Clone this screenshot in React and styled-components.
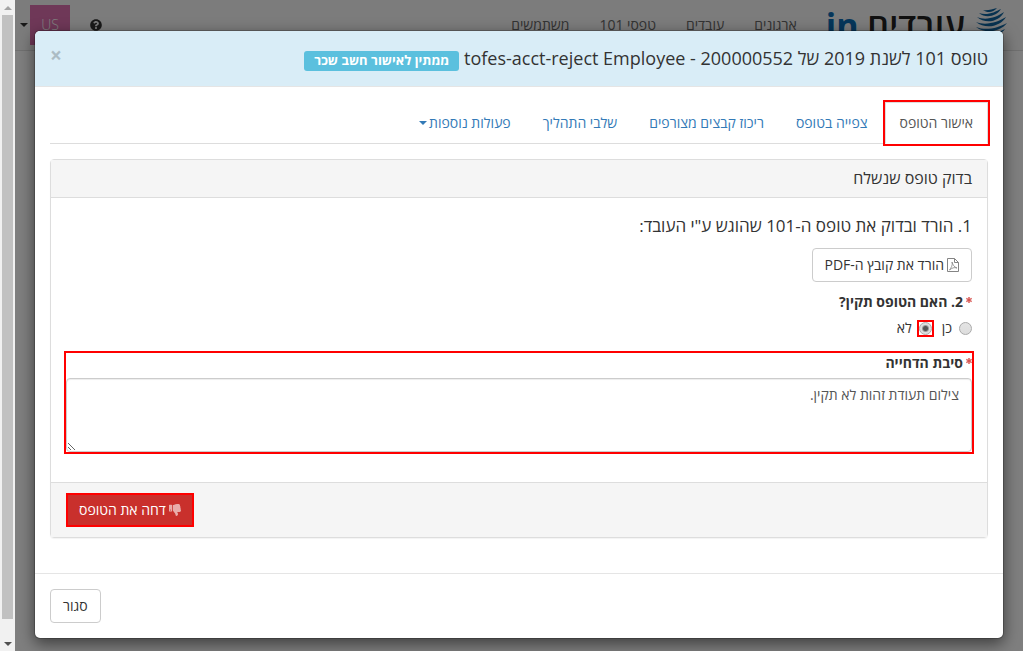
import React from "react";
import styled, { createGlobalStyle } from "styled-components";
import { FaAsterisk, FaQuestionCircle, FaThumbsDown } from "react-icons/fa";

const GlobalStyle = createGlobalStyle`
  * {
    box-sizing: border-box;
  }
  body {
    margin: 0;
    color: #333;
    background: #fff;
    font-family: "Open Sans", "Noto Sans", "DejaVu Sans", sans-serif;
    font-size: 14px;
    line-height: 20px;
  }
  button, input, textarea {
    font: inherit;
    color: inherit;
  }
`;

const Page = styled.div`
  display: flex;
  min-height: 100vh;
`;

const Scrollbar = styled.div`
  display: flex;
  flex-direction: column;
  flex: 0 0 15px;
  height: 100vh;
  padding: 0 2px;
  background: #f1f1f1;
`;

const Arrow = styled.div`
  display: flex;
  align-items: center;
  justify-content: center;
  height: 15px;

  &:before {
    content: "";
    border: 4px solid transparent;
    border-top-width: 0;
    border-bottom-color: #a3a3a3;
    ${p => p.$down && "border-top: 4px solid #505050; border-bottom-width: 0;"}
  }
`;

const Track = styled.div`
  flex: 1;
  padding-bottom: 17px;
`;

const Thumb = styled.div`
  height: 100%;
  background: #c1c1c1;
`;

const Stage = styled.div`
  position: relative;
  flex: 1;
  min-width: 0;
  overflow: hidden;
  direction: rtl;
`;

const Navbar = styled.header`
  display: flex;
  align-items: center;
  height: 51px;
  padding: 0 16px 0 15px;
  background: #f8f8f8;
  border-bottom: 1px solid #e0e0e0;
`;

const Logo = styled.a`
  display: flex;
  align-items: center;
  gap: 10px;
  margin-left: 14px;
  color: #222;
  font-size: 34px;
  font-weight: 600;
  line-height: 50px;
  text-decoration: none;

  svg {
    margin-bottom: 6px;
  }

  b {
    color: #0a6cb5;
    font-weight: 700;
  }
`;

const NavLinks = styled.nav`
  display: flex;
  flex: 1;

  a {
    padding: 15px;
    color: #666;
    text-decoration: none;
  }
`;

const Help = styled.button`
  display: flex;
  padding: 0;
  border: 0;
  background: none;
  font-size: 12px;
`;

const Account = styled.button`
  display: flex;
  align-items: center;
  gap: 2px;
  margin-right: 20px;
  margin-left: -10px;
  padding: 0;
  border: 0;
  background: none;
`;

const Avatar = styled.span`
  width: 40px;
  background: #df70b0;
  color: #fff;
  font-weight: 300;
  line-height: 40px;
`;

const Caret = styled.span`
  display: inline-block;
  vertical-align: middle;
  border-top: 4px solid;
  border-right: 4px solid transparent;
  border-left: 4px solid transparent;
`;

const Backdrop = styled.div`
  position: absolute;
  inset: 0;
  padding: 30px 19px 12px;
  background: rgba(0, 0, 0, 0.5);
`;

const Modal = styled.section`
  background: #fff;
  background-clip: padding-box;
  border: 1px solid rgba(0, 0, 0, 0.2);
  border-radius: 6px;
  box-shadow: 0 5px 15px rgba(0, 0, 0, 0.5);
`;

const ModalHeader = styled.div`
  display: flex;
  align-items: flex-start;
  justify-content: space-between;
  padding: 15px;
  background: #d9edf7;
  border-bottom: 1px solid #e5e5e5;
  border-radius: 5px 5px 0 0;
`;

const Title = styled.h4`
  margin: 0;
  font-size: 18px;
  font-weight: 400;
  line-height: 25px;
`;

const Status = styled.span`
  display: inline-block;
  height: 20px;
  padding: 0 10px;
  border-radius: 3px;
  background: #5bc0de;
  color: #fff;
  font-size: 13px;
  font-weight: 700;
  line-height: 18px;
`;

const CloseIcon = styled.button`
  padding: 0;
  border: 0;
  background: none;
  color: #000;
  font-size: 21px;
  font-weight: 700;
  line-height: 18px;
  opacity: 0.2;
`;

const ModalBody = styled.div`
  padding: 15px;
`;

const Tabs = styled.nav`
  display: flex;
  gap: 2px;
  margin-bottom: 15px;
  border-bottom: 1px solid #ddd;
`;

const Tab = styled.a`
  display: flex;
  align-items: center;
  gap: 2px;
  margin-bottom: -1px;
  padding: 10px 14px;
  border: 1px solid transparent;
  color: #337ab7;
  text-decoration: none;
  ${p =>
    p.$active &&
    `
    background: #fff;
    border-color: #ddd #ddd transparent;
    color: #555;
    outline: 2px solid #f00;
  `}
`;

const Panel = styled.div`
  margin-bottom: 20px;
  border: 1px solid #ddd;
  border-radius: 4px;
  box-shadow: 0 1px 1px rgba(0, 0, 0, 0.05);
`;

const PanelHeading = styled.h3`
  margin: 0;
  padding: 10px 15px;
  background: #f5f5f5;
  border-bottom: 1px solid #ddd;
  font-size: 16px;
  font-weight: 400;
  line-height: 17px;
`;

const PanelBody = styled.form`
  padding: 15px 15px 30px;
`;

const PanelFooter = styled.div`
  display: flex;
  justify-content: flex-end;
  padding: 10px 15px;
  background: #f5f5f5;
  border-top: 1px solid #ddd;
`;

const Step = styled.h4`
  margin: 0 0 10px;
  font-size: 17px;
  font-weight: 400;
  line-height: 25px;
`;

const Button = styled.button`
  display: flex;
  align-items: center;
  gap: 3px;
  height: 34px;
  padding: 0 12px;
  border: 1px solid ${p => (p.$danger ? "#c9302c" : "#ccc")};
  border-radius: ${p => (p.$danger ? "0" : "4px")};
  background: ${p => (p.$danger ? "#c9302c" : "#fff")};
  color: ${p => (p.$danger ? "#fff" : "#333")};
  ${p => p.$danger && "outline: 2px solid #f00; outline-offset: -2px;"}

  svg {
    font-size: 12px;
    opacity: 0.6;
  }
`;

const Fieldset = styled.fieldset`
  margin: 10px 0 15px;
  padding: 0;
  border: 0;
`;

const legendStyle = `
  display: flex;
  align-items: center;
  gap: 3px;
  padding: 0;
  font-weight: 700;

  svg {
    margin-bottom: 4px;
    color: #d9534f;
    stroke: #d9534f;
    stroke-width: 40;
    font-size: 6px;
  }
`;

const Legend = styled.legend`
  ${legendStyle}
  margin-bottom: 6px;
`;

const Label = styled.label`
  ${legendStyle}
  margin-bottom: 5px;
`;

const Choices = styled.div`
  display: flex;
  gap: 10px;
`;

const Choice = styled.label`
  display: flex;
  align-items: center;
  gap: 7px;
`;

const Radio = styled.input`
  appearance: none;
  width: 13px;
  height: 13px;
  margin: 0;
  border: 1px solid #aaa;
  border-radius: 50%;
  background: linear-gradient(#e4e4e4, #ddd);

  &:checked {
    background: radial-gradient(circle, #555 0 2px, #ddd 4px);
  }
`;

const Marker = styled.span`
  display: flex;
  outline: ${p => (p.$on ? "2px solid #f00" : "none")};
`;

const Reason = styled.div`
  outline: 2px solid #f00;
`;

const TextArea = styled.textarea`
  display: block;
  width: 100%;
  height: 74px;
  padding: 6px 12px;
  border: 1px solid #ccc;
  border-radius: 4px;
  box-shadow: inset 0 1px 1px rgba(0, 0, 0, 0.075);
  color: #555;
  resize: vertical;
`;

const ModalFooter = styled.div`
  display: flex;
  justify-content: flex-end;
  padding: 15px;
  border-top: 1px solid #e5e5e5;
`;

const Globe = () => (
  <svg width="32" height="32" viewBox="0 0 32 32" fill="#0f64a0">
    <path d="M8 4C13 5 17 3 22 2C18 7 12 7 8 4z" />
    <path d="M4 7C12 10 20 6 26 3C22 10 11 13 4 7z" />
    <path d="M2 11C11 15 22 11 29 6C25 15 11 19 2 11z" />
    <path d="M1 16C11 20 23 16 31 11C26 20 11 24 1 16z" />
    <path d="M1 21C11 25 23 22 32 17C26 25 11 29 1 21z" />
    <path d="M4 26C13 29 23 27 30 23C24 31 12 33 4 26z" />
  </svg>
);

const PdfIcon = () => (
  <svg width="12" height="14" viewBox="0 0 12 14" fill="none" stroke="#333">
    <path d="M.5.5h7l4 4v9H.5zM7.5.5v4h4" />
    <path d="M5 4c1 3 2 5 5 6-3-1-5 0-7.500 2C4 10 6 7 5 4z" strokeWidth=".8" />
  </svg>
);

const tabs = ["אישור הטופס", "צפייה בטופס", "ריכוז קבצים מצורפים", "שלבי התהליך"];

export default () => {
  return (
    <>
      <GlobalStyle />
      <Page>
        <Scrollbar>
          <Arrow />
          <Track>
            <Thumb />
          </Track>
          <Arrow $down />
        </Scrollbar>
        <Stage lang="he">
          <Navbar>
            <Logo href="#">
              <Globe />
              <span>
                עובדים <b>in</b>
              </span>
            </Logo>
            <NavLinks>
              <a href="#">ארגונים</a>
              <a href="#">עובדים</a>
              <a href="#">טפסי 101</a>
              <a href="#">משתמשים</a>
            </NavLinks>
            <Help aria-label="עזרה">
              <FaQuestionCircle />
            </Help>
            <Account>
              <Avatar>US</Avatar>
              <Caret />
            </Account>
          </Navbar>
          <Backdrop>
            <Modal role="dialog" aria-labelledby="title">
              <ModalHeader>
                <Title id="title">
                  טופס 101 לשנת 2019 של 200000552 - tofes-acct-reject Employee{" "}
                  <Status>ממתין לאישור חשב שכר</Status>
                </Title>
                <CloseIcon aria-label="סגור">×</CloseIcon>
              </ModalHeader>
              <ModalBody>
                <Tabs>
                  {tabs.map((tab, i) => (
                    <Tab href="#" key={tab} $active={i === 0}>
                      {tab}
                    </Tab>
                  ))}
                  <Tab href="#">
                    פעולות נוספות
                    <Caret />
                  </Tab>
                </Tabs>
                <Panel>
                  <PanelHeading>בדוק טופס שנשלח</PanelHeading>
                  <PanelBody>
                    <Step>1. הורד ובדוק את טופס ה-101 שהוגש ע"י העובד:</Step>
                    <Button type="button">
                      <PdfIcon />
                      הורד את קובץ ה-PDF
                    </Button>
                    <Fieldset>
                      <Legend>
                        <FaAsterisk />
                        2. האם הטופס תקין?
                      </Legend>
                      <Choices>
                        <Choice>
                          <Marker>
                            <Radio type="radio" name="valid" />
                          </Marker>
                          כן
                        </Choice>
                        <Choice>
                          <Marker $on>
                            <Radio type="radio" name="valid" defaultChecked />
                          </Marker>
                          לא
                        </Choice>
                      </Choices>
                    </Fieldset>
                    <Reason>
                      <Label htmlFor="reason">
                        <FaAsterisk />
                        סיבת הדחייה
                      </Label>
                      <TextArea id="reason" defaultValue="צילום תעודת זהות לא תקין." />
                    </Reason>
                  </PanelBody>
                  <PanelFooter>
                    <Button $danger>
                      <FaThumbsDown />
                      דחה את הטופס
                    </Button>
                  </PanelFooter>
                </Panel>
              </ModalBody>
              <ModalFooter>
                <Button>סגור</Button>
              </ModalFooter>
            </Modal>
          </Backdrop>
        </Stage>
      </Page>
    </>
  );
};
